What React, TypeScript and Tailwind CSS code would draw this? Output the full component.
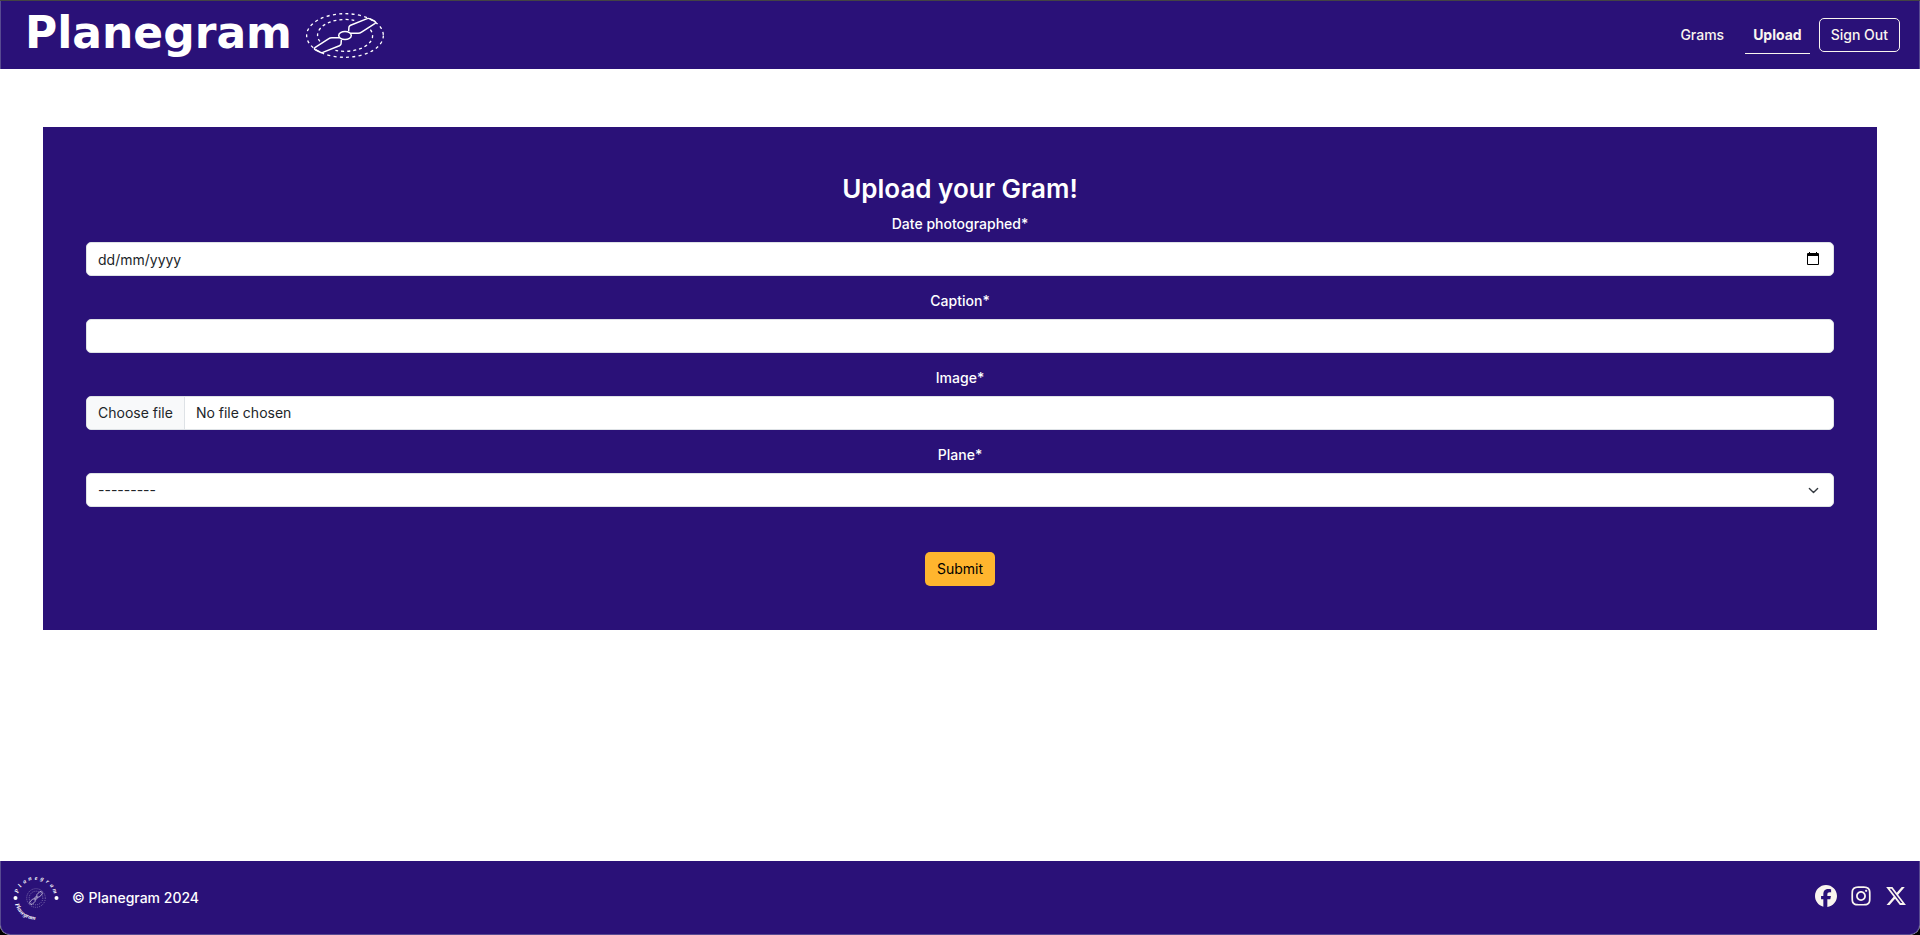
import type { ReactNode } from "react";
import { FaFacebook, FaInstagram, FaXTwitter } from "react-icons/fa6";

const controlClass =
  "h-[34px] w-full rounded-[5px] border border-[#dee2e6] bg-white px-[11px] text-sm text-[#212529] outline-none placeholder:text-[#212529] placeholder:opacity-100";

const BLADE = "M178 93 L179 80 Q180 77 184 75 L234 55 Q238 53 243 56 L257 63 Q262 66 257 70 L217 96 Q211 100 204 99 L183 99";

function Propeller() {
  return (
    <svg viewBox="46 32 242 148" className="h-[49px] w-20" fill="none" stroke="white" aria-hidden="true">
      <g strokeWidth="4">
        <ellipse cx="167" cy="106" rx="116" ry="66" strokeDasharray="9 10" />
        <path d="M138 151 A84 48 0 0 0 250 112 A84 48 0 0 0 240 84" strokeDasharray="9 9" />
        <path d="M195 60 A84 48 0 0 0 84 104 A84 48 0 0 0 91 124" strokeDasharray="9 9" />
      </g>
      <g strokeWidth="4.5" strokeLinejoin="round">
        <ellipse cx="167" cy="106" rx="19" ry="12" />
        <path d={BLADE} />
        <path d={BLADE} transform="rotate(180 167 106)" />
      </g>
    </svg>
  );
}

function Badge() {
  return (
    <svg viewBox="0 0 48 48" className="size-12" fill="white" aria-label="Planegram" role="img">
      <defs>
        <path id="lower-arc" d="M3.2 30 A21.5 21.5 0 0 0 30 45" />
      </defs>
      {"Planegram".split("").map((letter, i) => (
        <text
          key={i}
          x="24"
          y="5.5"
          textAnchor="middle"
          transform={`rotate(${-70 + i * 17.5} 24 24)`}
          className="font-['Liberation_Serif',serif] text-[6px] font-bold italic"
        >
          {letter}
        </text>
      ))}
      <text className="font-['Liberation_Serif',serif] text-[6px] font-bold italic">
        <textPath href="#lower-arc">Planegram</textPath>
      </text>
      <circle cx="3.5" cy="24" r="2" />
      <circle cx="44.5" cy="24" r="2" />
      <g fill="none" stroke="white" opacity="0.75" strokeWidth="0.5">
        <circle cx="24" cy="24" r="9.3" strokeDasharray="1 1.1" />
        <circle cx="24" cy="24" r="6.8" strokeDasharray="1 1.1" />
        <g transform="rotate(-46 24 24)" strokeWidth="0.8">
          <circle cx="24" cy="24" r="1.2" />
          <path d="M25.2 24 L27 22.3 H31.5 Q33.3 24 31.5 25.7 H27 Z" />
          <path d="M22.8 24 L21 22.3 H16.5 Q14.7 24 16.5 25.7 H21 Z" />
        </g>
      </g>
    </svg>
  );
}

function CalendarIcon() {
  return (
    <svg viewBox="0 0 12 13" className="h-[13px] w-3" aria-hidden="true">
      <path fill="black" fillRule="evenodd" d="M2 0h1v1h6V0h1v1h1q1 0 1 1v10q0 1-1 1H1q-1 0-1-1V2q0-1 1-1h1zM1 4v8h10V4z" />
    </svg>
  );
}

function Field({ id, label, children }: { id: string; label: string; children: ReactNode }) {
  return (
    <div className="mb-[14px] flex flex-col items-center">
      <label htmlFor={id} className="mb-[7px] text-sm leading-[22px] font-medium">
        {label}
        <span>*</span>
      </label>
      <div className="relative w-full">{children}</div>
    </div>
  );
}

export default function App() {
  return (
    <div className="min-h-screen bg-black font-['Inter',sans-serif] text-sm">
      <div className="flex min-h-screen flex-col overflow-hidden rounded-b-[10px] border-t border-t-[#444444] bg-white">
        <header className="flex h-[68px] items-center justify-between border-x border-[#584a91] bg-[#2a1178] pr-[19px] pl-6">
          <a href="#home" className="flex items-center gap-[13px]">
            <span className="pb-1 font-['DejaVu_Sans',sans-serif] text-[44px] leading-[48px] font-bold text-white">
              Planegram
            </span>
            <Propeller />
          </a>
          <nav className="flex items-center text-[#faf5ef]">
            <a href="#grams" className="mr-[13px] px-2 py-[7px] font-medium">
              Grams
            </a>
            <a href="#upload" aria-current="page" className="mr-[9px] border-b border-[#faf5ef] px-2 pt-[9px] pb-2 font-bold">
              Upload
            </a>
            <button type="button" className="h-[34px] rounded-[5px] border border-[#faf5ef] px-[11px] font-medium">
              Sign Out
            </button>
          </nav>
        </header>

        <main className="flex-1 px-[43px] pt-[58px] pb-14">
          <form className="bg-[#2a1178] px-[43px] pt-11 pb-11 text-white" onSubmit={(e) => e.preventDefault()}>
            <h1 className="mb-[7px] text-center text-[26px] leading-[35px] font-semibold">Upload your Gram!</h1>
            <Field id="date" label="Date photographed">
              <input id="date" type="text" placeholder="dd/mm/yyyy" className={controlClass} />
              <button type="button" aria-label="Open calendar" className="absolute top-[10px] right-[15px]">
                <CalendarIcon />
              </button>
            </Field>
            <Field id="caption" label="Caption">
              <input id="caption" type="text" className={controlClass} />
            </Field>
            <Field id="image" label="Image">
              <input id="image" type="file" className="sr-only" />
              <label
                htmlFor="image"
                className="flex h-[34px] w-full items-stretch overflow-hidden rounded-[5px] border border-[#dee2e6] bg-white leading-8 text-[#212529]"
              >
                <span className="border-r border-[#dee2e6] bg-[#f8f9fa] px-[11px]">Choose file</span>
                <span className="px-[11px]">No file chosen</span>
              </label>
            </Field>
            <Field id="plane" label="Plane">
              <select id="plane" className={`${controlClass} appearance-none`}>
                <option>---------</option>
              </select>
              <svg viewBox="0 0 16 16" className="pointer-events-none absolute top-3 right-[15px] size-[11px]" fill="none" aria-hidden="true">
                <path d="m2 5 6 6 6-6" stroke="#343a40" strokeWidth="2" strokeLinecap="round" strokeLinejoin="round" />
              </svg>
            </Field>
            <div className="mt-[45px] flex justify-center">
              <button type="submit" className="h-[34px] rounded-[5px] bg-[#ffb52e] px-3 text-black">
                Submit
              </button>
            </div>
          </form>
        </main>

        <footer className="flex h-[74px] items-center justify-between rounded-b-[10px] border border-t-0 border-[#584a91] bg-[#2a1178] pr-3 pl-[11px]">
          <div className="flex items-center gap-3 font-medium text-white">
            <Badge />
            <p>© Planegram 2024</p>
          </div>
          <div className="flex gap-[13px] pb-[3px] text-[22px] text-[#faf5ef]">
            <a href="#facebook" aria-label="Facebook">
              <FaFacebook />
            </a>
            <a href="#instagram" aria-label="Instagram">
              <FaInstagram />
            </a>
            <a href="#x" aria-label="X">
              <FaXTwitter />
            </a>
          </div>
        </footer>
      </div>
    </div>
  );
}
